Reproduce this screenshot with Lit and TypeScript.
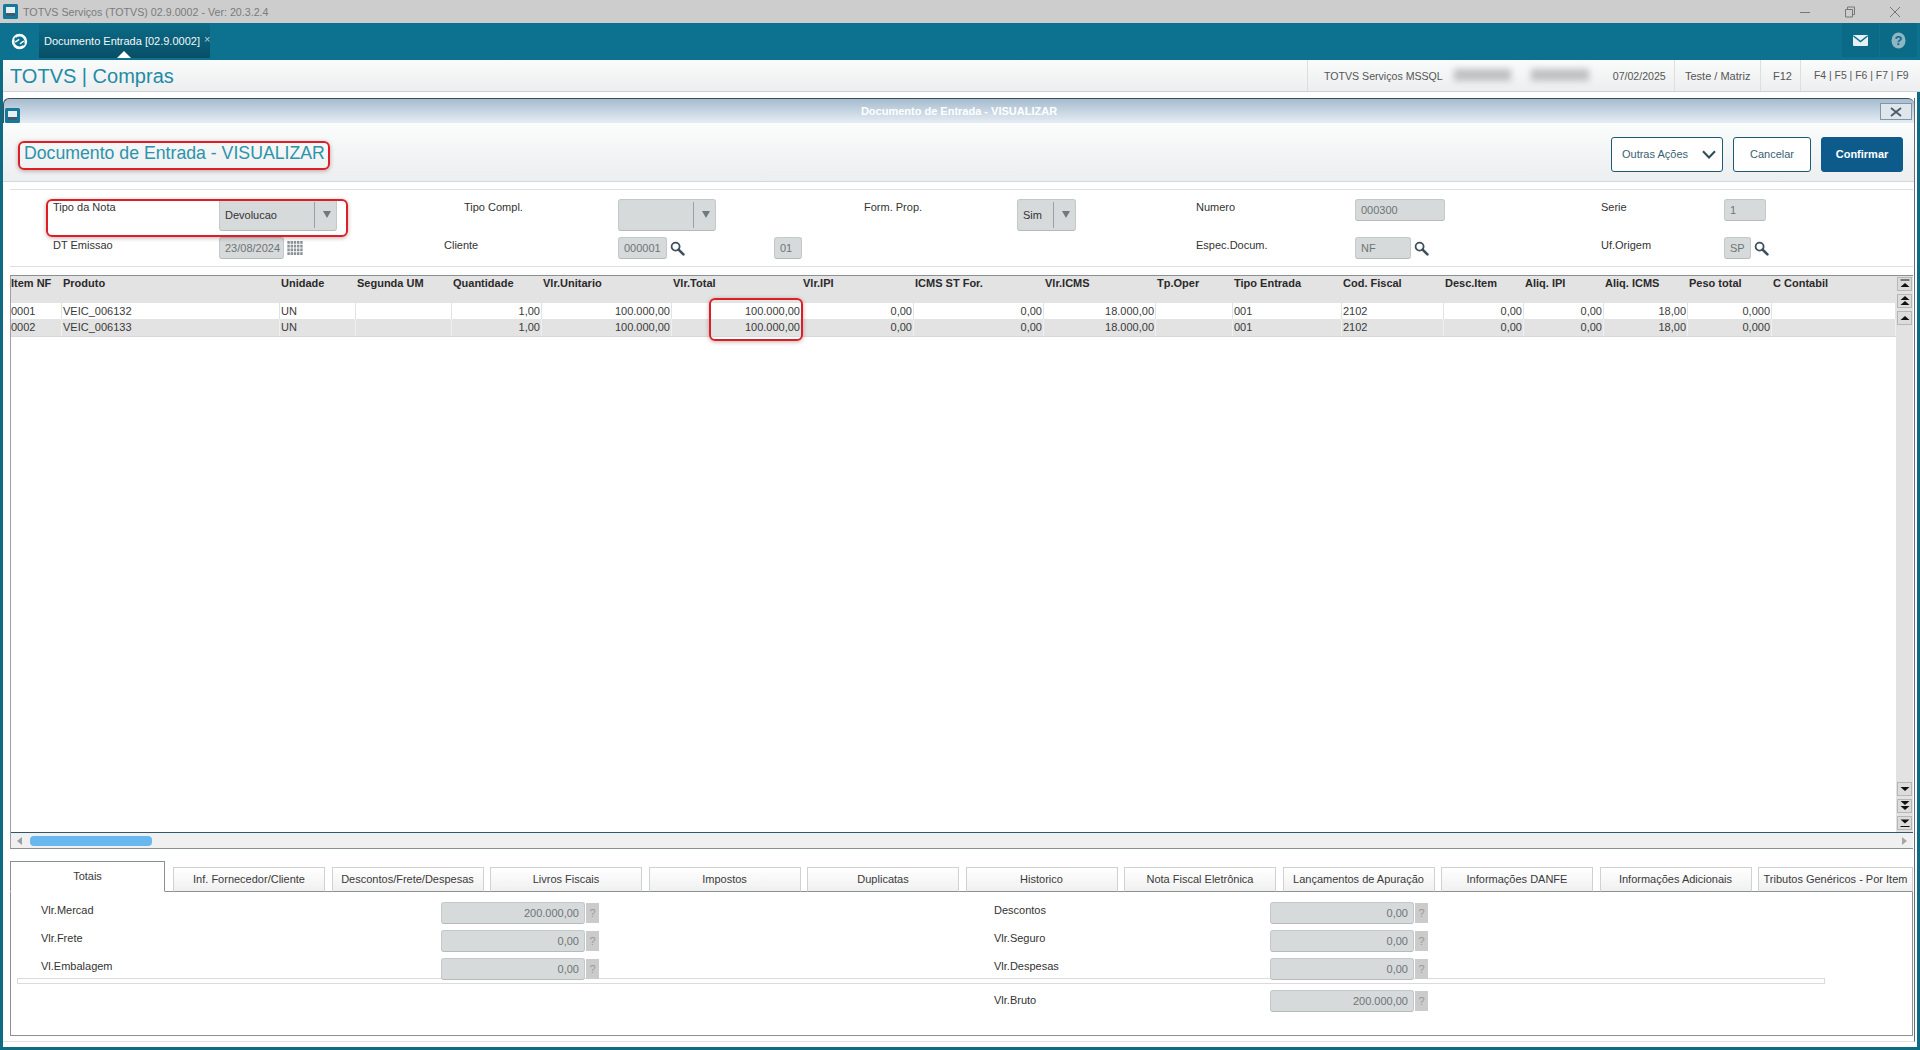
import { LitElement, html, css, svg } from "lit";
import { customElement } from "lit/decorators.js";

const COLS = ["Item NF", "Produto", "Unidade", "Segunda UM", "Quantidade", "Vlr.Unitario", "Vlr.Total", "Vlr.IPI", "ICMS ST For.", "Vlr.ICMS", "Tp.Oper", "Tipo Entrada", "Cod. Fiscal", "Desc.Item", "Aliq. IPI", "Aliq. ICMS", "Peso total", "C Contabil"];
const LEFT = new Set([0, 1, 2, 3, 10, 11, 12, 17]);
const ROWS = [
  ["0001", "VEIC_006132", "UN", "", "1,00", "100.000,00", "100.000,00", "0,00", "0,00", "18.000,00", "", "001", "2102", "0,00", "0,00", "18,00", "0,000", ""],
  ["0002", "VEIC_006133", "UN", "", "1,00", "100.000,00", "100.000,00", "0,00", "0,00", "18.000,00", "", "001", "2102", "0,00", "0,00", "18,00", "0,000", ""],
];
const TABS = ["Inf. Fornecedor/Cliente", "Descontos/Frete/Despesas", "Livros Fiscais", "Impostos", "Duplicatas", "Historico", "Nota Fiscal Eletrônica", "Lançamentos de Apuração", "Informações DANFE", "Informações Adicionais"];

const lens = html`<svg class="lens" width="15" height="15" viewBox="0 0 15 15"><circle cx="5.6" cy="5.6" r="4" fill="none" stroke="#3d4f5c" stroke-width="1.8"/><path d="M8.6 8.6 13.4 13.4" stroke="#3d4f5c" stroke-width="2.6" stroke-linecap="round"/></svg>`;
const winIconSvg = (cls: string) => html`<svg class="${cls}" width="15" height="15" viewBox="0 0 15 15"><rect width="15" height="15" rx="1.5" fill="#14799a"/><rect x="3" y="3" width="9" height="9" fill="#e8f0f4"/><rect x="3" y="9" width="9" height="3" fill="#3d5c70"/></svg>`;
const calCells = [0, 1, 2, 3, 4].flatMap((x) => [0, 1, 2, 3].map((y) => svg`<rect x="${x * 3.2}" y="${y * 3.7}" width="2.4" height="2.8" fill="#8b9296"/>`));
const scrollTri = (kind: string) => {
  const up = kind.startsWith("u");
  const tri = (y: number) => up ? `M2.5 ${y + 4}L7 ${y}L11.5 ${y + 4}Z` : `M2.5 ${y}L7 ${y + 4}L11.5 ${y}Z`;
  let d = "";
  if (kind === "u1") d = tri(5);
  if (kind === "u2") d = tri(2) + tri(7);
  if (kind === "u3") d = "M2.5 2.5H11.5V3.5H2.5Z" + tri(6);
  if (kind === "d1") d = tri(5);
  if (kind === "d2") d = tri(2) + tri(7);
  if (kind === "d3") d = tri(3.5) + "M2.5 10H11.5V11H2.5Z";
  return html`<div class="sbtn"><svg width="14" height="14" viewBox="0 0 14 14"><path d="${d}" fill="#111"/></svg></div>`;
};
const tot = (l: string, v: string, last = false) =>
  html`<div class="tot ${last ? "last" : ""}"><div class="lbl">${l}</div><div class="fld">${v}</div><div class="q">?</div></div>`;

@customElement("app-root")
export class AppRoot extends LitElement {
  static styles = css`
    :host { display: flex; flex-direction: column; position: relative; width: 1920px; height: 1050px; overflow: hidden; background: #fff; font: 11px "Liberation Sans", Arial, sans-serif; color: #333; }
    .osbar { height: 23px; flex: none; background: #cdcdcd; display: flex; align-items: center; padding-left: 3px; color: #7b7b7b; font-size: 10.7px; white-space: nowrap; }
    .osbar .t { margin-left: 5px; }
    .osbtns { margin-left: auto; display: flex; gap: 33px; padding-right: 19px; align-items: center; }
    .topbar { height: 37px; flex: none; background: #0d7290; display: flex; align-items: stretch; color: #fff; }
    .logo { width: 39px; display: flex; align-items: center; justify-content: center; }
    .apptab { position: relative; width: 171px; height: 35px; box-sizing: border-box; padding-left: 5px; display: flex; align-items: center; gap: 4px; font-size: 11px; white-space: nowrap; background: linear-gradient(#0c6c89, #074f66); color: #f3f8fa; }
    .apptab .x { color: #b9d4dd; font-size: 11px; margin-top: -3px; }
    .apptab::after { content: ""; position: absolute; left: 78px; bottom: 0; border: 7px solid transparent; border-top: 0; border-bottom-color: #fff; }
    .topright { margin-left: auto; display: flex; gap: 1px; padding-right: 3px; height: 34px; }
    .topright div { width: 37px; background: #0b6a86; display: flex; align-items: center; justify-content: center; }
    .main { flex: 1; min-height: 0; display: flex; flex-direction: column; border: 3px solid #0f6a84; border-top: 0; }
    .subhdr { height: 32px; box-sizing: border-box; flex: none; margin-right: -3px; background: linear-gradient(#fafbfb, #eceeef); border-bottom: 1px solid #cfd2d3; display: flex; align-items: center; color: #555; }
    .brand { font-size: 20px; color: #1f8ba6; margin-left: 7px; padding-top: 1px; }
    .cells { margin-left: auto; display: flex; height: 100%; font-size: 10.6px; white-space: nowrap; }
    .cell { display: flex; align-items: center; border-left: 1px solid #dcdfe0; box-sizing: border-box; }
    .c1 { width: 367px; padding-left: 16px; }
    .c2 { width: 86px; padding-left: 10px; font-size: 11px; }
    .c3 { width: 40px; padding-left: 12px; font-size: 11px; }
    .c4 { width: 120px; padding-left: 13px; font-size: 10.4px; }
    .blur { width: 135px; margin: 0 24px 0 11px; height: 14px; display: flex; gap: 20px; flex: none; }
    .blur i { display: block; background: #bfc1c3; filter: blur(3px); flex: 1; height: 12px; }
    .window { flex: 1; min-height: 0; margin: 6px 2px 5px 0; display: flex; flex-direction: column; border-bottom: 1px solid #dfe2e3; border-right: 1px solid #5c7078; }
    .wtitle { height: 25px; box-sizing: border-box; flex: none; border: 1px solid #3e4f5a; border-bottom: 0; border-right: 0; border-radius: 6px 6px 0 0; background: linear-gradient(#a6bccf, #e6edf4); position: relative; display: flex; align-items: center; justify-content: center; color: #fff; font-weight: bold; font-size: 11px; }
    .winicon { position: absolute; left: 1px; top: 9px; }
    .wclose { position: absolute; right: 2px; top: 4px; width: 32px; height: 17px; border: 1px solid #8295a5; background: #dfe6ec; display: flex; align-items: center; justify-content: center; box-sizing: border-box; }
    .actions { height: 59px; flex: none; box-sizing: border-box; background: linear-gradient(#fbfcfc, #eceeef); border-bottom: 1px solid #d4d7d8; display: flex; align-items: center; padding: 0 11px 0 21px; }
    .ptitle { font-size: 17.7px; color: #2b93aa; white-space: nowrap; padding-top: 2px; }
    .btns { margin-left: auto; display: flex; gap: 10px; margin-top: 4px; }
    .btn { height: 35px; box-sizing: border-box; border: 1px solid #1f5a75; border-radius: 3px; background: #fff; color: #3b5f70; display: flex; align-items: center; justify-content: center; font-size: 11px; white-space: nowrap; }
    .b1 { width: 112px; gap: 14px; padding-left: 4px; }
    .b2 { width: 78px; }
    .b3 { width: 82px; background: #0c5b8b; border-color: #0c5b8b; color: #fff; font-weight: bold; }
    .form { height: 78px; flex: none; box-sizing: border-box; margin: 7px 1px 0 7px; border-top: 1px solid #dfe1e2; border-bottom: 1px solid #dcdfe0; padding: 9px 0 0 43px; display: flex; flex-direction: column; gap: 6px; }
    .frow { display: grid; align-items: start; }
    .r1 { height: 32px; grid-template-columns: 166px 245px 154px 246px 153px 179px 159px 246px 123px 1fr; }
    .r2 { height: 22px; grid-template-columns: 166px 225px 174px 156px 422px 159px 246px 123px 1fr; }
    .lbl { color: #333; padding-top: 2px; white-space: nowrap; }
    .fld { height: 22px; box-sizing: border-box; background: #d6dadb; border: 1px solid #c3c8ca; border-bottom-color: #b5bbbd; border-radius: 3px; color: #6f7476; display: flex; align-items: center; padding: 0 5px; white-space: nowrap; }
    .sel { height: 32px; color: #333; padding: 0 0 0 5px; }
    .sel span { flex: 1; }
    .sel b { width: 22px; height: 26px; border-left: 1px solid #9aa1a4; display: flex; align-items: center; justify-content: center; padding-left: 2px; box-sizing: border-box; }
    .sel b::before { content: ""; border: 4px solid transparent; border-top: 7px solid #6f7a80; border-bottom: 0; margin-top: -2px; }
    .w118 { width: 118px; } .w98 { width: 98px; } .w59 { width: 59px; }
    .w65 { width: 65px; } .w49 { width: 49px; } .w28 { width: 28px; } .w89 { width: 90px; } .w56 { width: 56px; } .w42 { width: 42px; } .w27 { width: 27px; }
    .with { display: flex; align-items: center; gap: 3px; }
    .lens, .cal { flex: none; }
    .grid { height: 574px; flex: none; margin: 8px 1px 0 7px; border-top: 1px solid #8a8f92; border-left: 1px solid #9ba0a3; border-bottom: 1px solid #8a8f92; box-sizing: border-box; display: grid; grid-template-columns: 1fr 17px; grid-template-rows: 1fr 16px; }
    .tbl { grid-column: 1; grid-row: 1; min-width: 0; overflow: hidden; }
    .hdr, .row { display: grid; grid-template-columns: 52px 218px 76px 96px 90px 130px 130px 112px 130px 112px 77px 109px 102px 80px 80px 84px 84px 124px; margin-left: -1px; }
    .hdr { height: 27px; background: #e3e3e3; font-weight: bold; color: #2a2a2a; padding-top: 1px; box-sizing: border-box; }
    .hdr div { white-space: nowrap; padding-left: 1px; }
    .row { height: 16px; align-items: stretch; color: #3a3a3a; }
    .row.b { background: #e3e3e3; height: 18px; border-bottom: 1px solid #d8d8d8; box-sizing: border-box; }
    .row div { border-right: 1px solid #e1e4e6; display: flex; align-items: center; padding: 0 1px 1px 1px; overflow: hidden; white-space: nowrap; box-sizing: border-box; }
    .row.b div { border-right-color: #f0f0f0; }
    .row div.r { justify-content: flex-end; }
    .vscroll { grid-column: 2; grid-row: 1; background: #e2e2e2; display: flex; flex-direction: column; padding: 1px 0 2px 1px; }
    .sgroup { display: flex; flex-direction: column; gap: 3px; }
    .sgroup.bot { margin-top: auto; }
    .sbtn { width: 15px; height: 14px; background: #dcdcdc; border: 1px solid #b6b6b6; box-sizing: border-box; display: flex; align-items: center; justify-content: center; }
    .sbtn svg { flex: none; }
    .hscroll { grid-column: 1 / 3; grid-row: 2; background: #f0f0f0; border-top: 1px solid #2f5767; display: flex; align-items: center; padding-left: 6px; gap: 8px; }
    .thumb { width: 122px; height: 10px; border-radius: 4px; background: #68b7ee; }
    .tri { border: 4px solid transparent; border-left: 0; border-right: 5px solid #9aa0a3; }
    .triR { margin-left: auto; margin-right: 6px; border: 4px solid transparent; border-right: 0; border-left: 5px solid #a3a8ab; }
    .tabs { height: 30px; flex: none; margin: 13px 1px -1px 7px; display: flex; align-items: flex-end; gap: 6.5px; position: relative; z-index: 1; }
    .tab { width: 152px; height: 25px; box-sizing: border-box; flex: none; background: linear-gradient(#fff, #f0f0f0); border: 1px solid #cfd1d2; border-bottom: 1px solid #8a8f92; display: flex; align-items: center; justify-content: center; color: #3a3a3a; white-space: nowrap; padding-bottom: 2px; }
    .tab.on { width: 155px; height: 31px; margin-right: 1.5px; background: #fff; border: 1px solid #8a8f92; border-bottom: 1px solid #fff; padding-bottom: 2px; }
    .tab.wide { width: 155px; }
    .panel { height: 145px; flex: none; margin: 0 1px 0 7px; border: 1px solid #8a8f92; box-sizing: border-box; position: relative; display: grid; grid-template-columns: 953px 1fr; padding: 10px 0 0 30px; }
    .sep { position: absolute; left: 6px; top: 86px; width: 1806px; height: 4px; border: 1px solid #d9dbdc; background: #fff; }
    .col { display: flex; flex-direction: column; gap: 6px; position: relative; }
    .tot { display: grid; height: 22px; align-items: center; grid-template-columns: 400px 144px 1px 13px; }
    .col.rt .tot { grid-template-columns: 276px 144px 1px 13px; }
    .tot .lbl { padding: 0 0 7px; }
    .tot .fld { justify-content: flex-end; grid-column: 2; }
    .tot.last { margin-top: 4px; }
    .tot.last .lbl { padding-bottom: 3px; }
    .q { grid-column: 4; height: 20px; background: #cbcbcb; color: #9a9a9a; display: flex; align-items: center; justify-content: center; }
    .anno { position: absolute; border: 2px solid #dc1f26; border-radius: 6px; box-sizing: border-box; box-shadow: 0 1px 4px rgba(90, 20, 20, .35); pointer-events: none; z-index: 5; }
    .a1 { left: 18px; top: 141px; width: 312px; height: 29px; }
    .a2 { left: 46px; top: 199px; width: 302px; height: 38px; }
    .a3 { left: 709px; top: 298px; width: 94px; height: 43px; }
  `;

  render() {
    return html`
      <div class="osbar">
        ${winIconSvg("")}<span class="t">TOTVS Serviços (TOTVS) 02.9.0002 - Ver: 20.3.2.4</span>
        <div class="osbtns">
          <svg width="12" height="12" viewBox="0 0 12 12"><path d="M1 6.5H11" stroke="#777"/></svg>
          <svg width="12" height="12" viewBox="0 0 12 12"><path d="M1.5 3.5H8.5V11H1.5ZM3.5 3.5V1H10.5V8.5H8.5" fill="none" stroke="#777"/></svg>
          <svg width="12" height="12" viewBox="0 0 12 12"><path d="M1 1 11 11M11 1 1 11" stroke="#777"/></svg>
        </div>
      </div>
      <div class="topbar">
        <div class="logo"><svg width="17" height="17" viewBox="0 0 17 17"><circle cx="8.5" cy="8.5" r="6.4" fill="none" stroke="#fff" stroke-width="2.6"/><path d="M3.6 5.2 13.4 11.8" stroke="#0d7290" stroke-width="2.4"/><path d="M4.2 9.2 8.2 6.4M9 10.8 12.8 8" stroke="#fff" stroke-width="1.5"/></svg></div>
        <div class="apptab"><span>Documento Entrada [02.9.0002]</span><span class="x">×</span></div>
        <div class="topright">
          <div><svg width="15" height="11" viewBox="0 0 15 11"><rect width="15" height="11" rx="1" fill="#e6f1f5"/><path d="M0.5 1 7.5 6.5 14.5 1" fill="none" stroke="#0b6a86" stroke-width="1.4"/></svg></div>
          <div><svg width="15" height="17" viewBox="0 0 15 17"><ellipse cx="7.5" cy="8.5" rx="7" ry="8" fill="#8fb6c4"/><text x="7.5" y="13" text-anchor="middle" font-family="Liberation Sans" font-weight="bold" font-size="13" fill="#0b6a86">?</text></svg></div>
        </div>
      </div>
      <div class="main">
        <div class="subhdr">
          <div class="brand">TOTVS | Compras</div>
          <div class="cells">
            <div class="cell c1"><span>TOTVS Serviços MSSQL</span><div class="blur"><i></i><i></i></div><span>07/02/2025</span></div>
            <div class="cell c2">Teste / Matriz</div>
            <div class="cell c3">F12</div>
            <div class="cell c4">F4 | F5 | F6 | F7 | F9</div>
          </div>
        </div>
        <div class="window">
          <div class="wtitle">${winIconSvg("winicon")}<span>Documento de Entrada - VISUALIZAR</span>
            <div class="wclose"><svg width="12" height="10" viewBox="0 0 12 10"><path d="M1 1 11 9M11 1 1 9" stroke="#4a5a66" stroke-width="1.8"/></svg></div>
          </div>
          <div class="actions">
            <div class="ptitle">Documento de Entrada - VISUALIZAR</div>
            <div class="btns">
              <div class="btn b1"><span>Outras Ações</span><svg width="14" height="9" viewBox="0 0 14 9"><path d="M1 1.2 7 7.5 13 1.2" fill="none" stroke="#2f4a58" stroke-width="2"/></svg></div>
              <div class="btn b2">Cancelar</div>
              <div class="btn b3">Confirmar</div>
            </div>
          </div>
          <div class="form">
            <div class="frow r1">
              <div class="lbl">Tipo da Nota</div>
              <div class="fld sel w118"><span>Devolucao</span><b></b></div>
              <div class="lbl">Tipo Compl.</div>
              <div class="fld sel w98"><span></span><b></b></div>
              <div class="lbl">Form. Prop.</div>
              <div class="fld sel w59"><span>Sim</span><b></b></div>
              <div class="lbl">Numero</div>
              <div class="fld w89">000300</div>
              <div class="lbl">Serie</div>
              <div class="fld w42">1</div>
            </div>
            <div class="frow r2">
              <div class="lbl">DT Emissao</div>
              <div class="with"><div class="fld w65">23/08/2024</div><svg class="cal" width="16" height="14" viewBox="0 0 15.2 13.9">${calCells}</svg></div>
              <div class="lbl">Cliente</div>
              <div class="with"><div class="fld w49">000001</div>${lens}</div>
              <div class="fld w28">01</div>
              <div class="lbl">Espec.Docum.</div>
              <div class="with"><div class="fld w56">NF</div>${lens}</div>
              <div class="lbl">Uf.Origem</div>
              <div class="with"><div class="fld w27">SP</div>${lens}</div>
            </div>
          </div>
          <div class="grid">
            <div class="tbl">
              <div class="hdr">${COLS.map((c) => html`<div>${c}</div>`)}</div>
              ${ROWS.map((r, i) => html`<div class="row ${i ? "b" : ""}">${r.map((v, j) => html`<div class="${LEFT.has(j) ? "" : "r"}">${v}</div>`)}</div>`)}
            </div>
            <div class="vscroll">
              <div class="sgroup">${scrollTri("u3")}${scrollTri("u2")}${scrollTri("u1")}</div>
              <div class="sgroup bot">${scrollTri("d1")}${scrollTri("d2")}${scrollTri("d3")}</div>
            </div>
            <div class="hscroll"><span class="tri"></span><div class="thumb"></div><span class="triR"></span></div>
          </div>
          <div class="tabs">
            <div class="tab on">Totais</div>
            ${TABS.map((t) => html`<div class="tab">${t}</div>`)}
            <div class="tab wide">Tributos Genéricos - Por Item</div>
          </div>
          <div class="panel">
            <div class="sep"></div>
            <div class="col">
              ${[["Vlr.Mercad", "200.000,00"], ["Vlr.Frete", "0,00"], ["Vl.Embalagem", "0,00"]].map(([l, v]) => tot(l, v))}
            </div>
            <div class="col rt">
              ${[["Descontos", "0,00"], ["Vlr.Seguro", "0,00"], ["Vlr.Despesas", "0,00"]].map(([l, v]) => tot(l, v))}
              ${tot("Vlr.Bruto", "200.000,00", true)}
            </div>
          </div>
        </div>
      </div>
      <div class="anno a1"></div>
      <div class="anno a2"></div>
      <div class="anno a3"></div>
    `;
  }
}
